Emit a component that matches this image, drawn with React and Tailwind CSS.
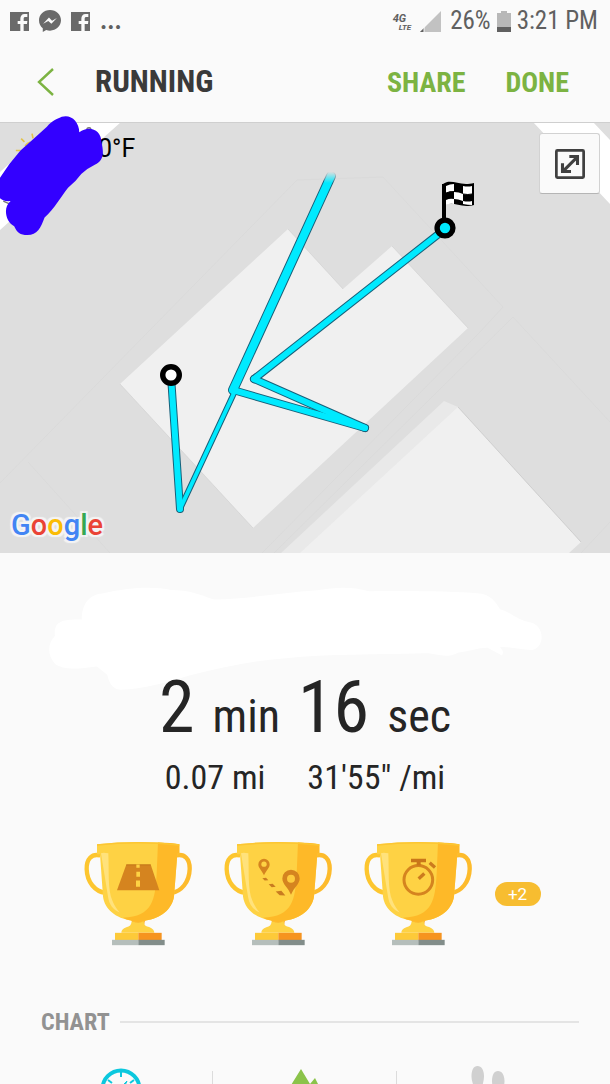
import React from "react";

function FacebookIcon() {
  return (
    <svg viewBox="0 0 57 57" className="size-[19px]" aria-hidden="true">
      <rect width="57" height="57" fill="#6a6a6a" />
      <path d="M31 57V36h-8v-9h8v-6c0-9 4-15 13-15h8v9h-5c-5 0-6 2-6 6v6h11l-1 9H41v21z" fill="#fafafa" />
    </svg>
  );
}

function MessengerIcon() {
  return (
    <svg viewBox="0 0 64 64" className="size-[22px]" aria-hidden="true">
      <path d="M32 0C14 0 0 13 0 30c0 10 4 18 11 23v11l10-6c4 1 7 2 11 2 18 0 32-13 32-30S50 0 32 0z" fill="#6a6a6a" />
      <path d="M12 40l17-18 9 9 14-8-16 17-9-8z" fill="#fafafa" />
    </svg>
  );
}

function StatusBar() {
  return (
    <div className="flex h-[42px] items-center justify-between pl-[10px] pr-[12px] text-[25px] leading-[30px] text-[#606060]">
      <div className="flex items-center gap-[10px]">
        <FacebookIcon />
        <MessengerIcon />
        <FacebookIcon />
        <span className="font-bold">...</span>
      </div>
      <div className="flex items-center gap-[6px]">
        <div className="flex flex-col pr-[3px] pt-[3px] font-[Roboto] font-bold italic">
          <span className="text-[11px] leading-[9px]">4G</span>
          <span className="pl-[6px] text-[8px] leading-[9px]">LTE</span>
        </div>
        <svg viewBox="0 0 21 21" className="mr-[3px] size-[21px]" aria-hidden="true">
          <path d="M21 0v21H0z" fill="#c2c2c2" />
          <path d="M4 17v4H0z" fill="#606060" />
          <path d="M4 16v5" stroke="#fafafa" />
        </svg>
        <span>26%</span>
        <svg viewBox="0 0 14 21" className="h-[21px] w-[14px]" aria-hidden="true">
          <path d="M4 0h6v2h4v14H0V2h4z" fill="#b8b8b8" />
          <path d="M0 16h14v5H0z" fill="#606060" />
        </svg>
        <span>3:21 PM</span>
      </div>
    </div>
  );
}

function TitleBar() {
  return (
    <header className="flex h-[80px] items-center pl-[36px] pr-[41px] font-bold">
      <button type="button" aria-label="Back" className="mr-[40px]">
        <svg viewBox="0 0 19 28" className="h-[28px] w-[19px]" fill="none" stroke="#7cb342" strokeWidth="2.4" aria-hidden="true">
          <path d="M17 1L3 14l14 13" />
        </svg>
      </button>
      <h1 className="flex-1 text-[31px] leading-[40px] text-[#3a3a3a]">RUNNING</h1>
      <div className="flex gap-[40px] pt-[2px] text-[28px] leading-[40px] text-[#7cb342]">
        <button type="button">SHARE</button>
        <button type="button">DONE</button>
      </div>
    </header>
  );
}

const ROUTE = [
  { d: "M171 254L180 387", w: 7 },
  { d: "M180 387L235 269", w: 5 },
  { d: "M254 257L445 107", w: 7 },
  { d: "M233 268L365 306", w: 7 },
  { d: "M365 306L254 257", w: 7 },
  { d: "M233 268L331 54", w: 9 },
];

function FinishFlag() {
  return (
    <g>
      <path d="M444 62v38" stroke="#000" strokeWidth="4" />
      <path d="M443 62c9-6 16 3 31-1v22c-14 4-21-5-31 1z" fill="#000" />
      <path d="M446 64q4-2 8-2v7q-4 0-8 2zM463 64q5 1 9 0v8q-4 1-9 0zM454 70q5 0 9 2v7q-5-2-9-2zM446 78q4-2 8-1v5q-4-1-8 1zM463 79q5 1 9 0v4q-4 0-9-1z" fill="#fff" />
      <path d="M446 71q4-2 8-1M463 72q5 1 9 0" stroke="#000" fill="none" />
    </g>
  );
}

function RouteMap() {
  return (
    <section aria-label="Route" className="relative">
      <svg viewBox="0 0 610 431" className="block w-full" aria-hidden="true">
        <defs>
          <linearGradient id="tip" x1="0" y1="0" x2="0" y2="1">
            <stop offset="0.2" stopColor="#dedede" />
            <stop offset="1" stopColor="#dedede" stopOpacity="0" />
          </linearGradient>
        </defs>
        <rect width="610" height="431" fill="#dedede" />
        <path d="M56 0h65L0 108V50zM533 0h60l17 18v64z" fill="#fff" />
        <g fill="none" stroke="#dadada" strokeWidth="1">
          <path d="M0 361L297 58l86-3 120 130-23 25-218 221" />
          <path d="M610 300L513 195 274 431M28 340l82 91M610 400l-29 31" />
        </g>
        <path d="M288 107l55 60 49-43 76 82-215 200-133-144z" fill="#f0f0f0" />
        <path d="M288 107l55 60M392 124l76 82M120 262l133 144" stroke="#cfcfcf" strokeWidth=".6" />
        <path d="M281 431l163-152 14 6 20 30-120 116z" fill="#e9e9e9" />
        <path d="M300 431l158-146 123 135-12 11z" fill="#f0f0f0" />
        <path d="M458 285l123 135" stroke="#c8c8c8" strokeWidth=".8" />
        <g fill="none" strokeLinecap="round" stroke="#17607a">
          {ROUTE.map((s) => <path key={s.d} d={s.d} strokeWidth={s.w + 1} />)}
        </g>
        <g fill="none" strokeLinecap="round" stroke="#00eaff">
          {ROUTE.map((s) => <path key={s.d} d={s.d} strokeWidth={s.w - 1} />)}
        </g>
        <rect x="324" y="47" width="14" height="14" fill="url(#tip)" />
        <circle cx="171" cy="253" r="8.3" fill="#fff" stroke="#000" strokeWidth="5.4" />
        <FinishFlag />
        <circle cx="445" cy="106" r="7.9" fill="#00eaff" stroke="#000" strokeWidth="5.4" />
        <path d="M0 .5h610" stroke="#cfcfcf" />
      </svg>

      <div className="absolute left-[98px] top-[12px] font-[Roboto] text-[25px] leading-[30px] text-black">0°F</div>
      <svg viewBox="0 0 330 380" className="absolute -top-[12px] left-0 h-[126px] w-[109px]" aria-hidden="true">
        <path d="M48 122h14M64 86l10 10M97 71l3 14M76 108q6-10 16-12" stroke="#e3c34b" strokeWidth="5" fill="none" />
        <path d="M10 275l22 10M262 56q8-6 14 0" stroke="#777" strokeWidth="4" fill="none" />
        <path d="M142 50C158 32 175 25 187 20c26-9 53 13 53 47 30-24 68-7 67 30 9 35 5 56-20 68q-25 12-41 28-16 22-40 42c-22 27-40 63-71 90-12 32-22 53-52 53-22 0-32-9-40-27-26-12-35-57-11-76-20 2-29-7-34-10l-3-52q27-46 67-91 45-40 80-72z" fill="#3300ff" />
      </svg>

      <button
        type="button"
        aria-label="Expand map"
        className="absolute right-[10px] top-[11px] flex size-[61px] items-center justify-center rounded-[3px] border border-[#d2d2d2] border-b-[#b5b5b5] bg-[#fafafa]"
      >
        <svg viewBox="0 0 88 88" className="size-[30px]" fill="none" stroke="#404040" aria-hidden="true">
          <rect x="4" y="4" width="80" height="80" rx="3" strokeWidth="8" />
          <path d="M24 65l41-41M42 22h24v25M22 42v24h25" strokeWidth="9" />
        </svg>
      </button>

      <div className="absolute bottom-[10px] left-[11px] flex font-[Roboto] text-[29px] font-medium leading-[36px] [text-shadow:0_0_3px_#f4f4f4,2px_2px_1px_#f4f4f4,-2px_2px_1px_#f4f4f4,2px_-2px_1px_#f4f4f4,-2px_-2px_1px_#f4f4f4]">
        <span className="text-[#4285f4]">G</span>
        <span className="text-[#ea4335]">o</span>
        <span className="text-[#fbbc05]">o</span>
        <span className="text-[#4285f4]">g</span>
        <span className="text-[#34a853]">l</span>
        <span className="text-[#ea4335]">e</span>
      </div>
    </section>
  );
}

function Summary() {
  return (
    <section className="flex flex-col items-center text-[#252525]">
      <svg viewBox="50 50 1434 307" className="ml-[48px] mt-[32px] h-[106px] w-[494px] self-start" aria-hidden="true">
        <path d="M148 150c0-44 20-73 60-76 90-20 150-20 200-10 50 0 80 12 124 28 110-3 200-20 300-27 60-10 100-10 150 3 120-2 240 0 320 6 30 2 50 26 60 46 30 8 50 30 80 36 56 6 50 82 10 82-32 0-60-10-90-8 10 10 10 16 6 24l-42-22c-30 0-50 10-86 14-40 20-60 0-100 2-130 4-280 2-400 14-90 6-180 26-280 50-70 22-130 38-200 42-24-3-32-20-38-44l-30-24c-60 8-98 10-122-8-24-26-20-60 0-80-4-40 16-50 78-48z" fill="#fff" />
      </svg>
      <div className="-mt-[23px] flex items-baseline text-[46px] leading-[80px]">
        <span className="text-[72px]">2</span>
        <span className="ml-[18px]">min</span>
        <span className="ml-[18px] text-[72px]">16</span>
        <span className="ml-[18px]">sec</span>
      </div>
      <div className="mt-[1px] flex gap-[42px] text-[34px] leading-[40px]">
        <span>0.07 mi</span>
        <span>31'55" /mi</span>
      </div>
    </section>
  );
}

function Trophy({ label, children }) {
  return (
    <svg viewBox="27 34 324 314" className="h-[105px] w-[108px]" role="img" aria-label={label}>
      <path d="M76 77C50 70 34 88 35 118c1 40 26 67 56 71" fill="none" stroke="#fdc62f" strokeWidth="13" />
      <path d="M303 77c26-7 42 11 41 41-1 40-26 67-54 71" fill="none" stroke="#fdbb2c" strokeWidth="13" />
      <path d="M160 255h61c-8 12-13 19-13 29h-36c0-10-4-18-12-29z" fill="#f9a825" />
      <path d="M66 43Q190 30 313 43v29h-6L297 200c-6 40-42 66-85 72-14 6-30 6-44 0-44-7-79-32-84-72L75 73h-9z" fill="#fed244" />
      <path d="M249 38q40 1 64 5v29h-6l-10 128c-6 40-42 66-85 72-14 6-30 6-44 0q-14-2-24-8c90-4 96-54 101-132z" fill="#feb928" />
      <path d="M78 70q6-3 22 0c2 50-2 110 12 142 6 16 14 26 22 36-20-8-32-24-35-48z" fill="#ffe27c" />
      <path d="M66 43Q190 30 313 43v5Q190 34 66 48z" fill="#fcc632" />
      <path d="M170 274c14 5 26 5 36 0 1 12 6 15 18 18 10 5 14 9 14 17H139c0-8 5-13 15-17 10-2 15-7 16-18z" fill="#fed244" />
      <path d="M120 309h70v22h-70z" fill="#fdca39" />
      <path d="M190 309h70v22h-70z" fill="#f6941f" />
      <path d="M111 330h79v16h-79z" fill="#b5bebb" />
      <path d="M190 330h79v16h-79z" fill="#828d8a" />
      {children}
    </svg>
  );
}

function Awards() {
  return (
    <section className="flex items-center justify-center gap-[32px] pl-[14px] pt-[44px]">
      <Trophy label="Distance">
        <path d="M154 104h73l26 77H126z" fill="#d5841f" />
        <path d="M154 105h73" stroke="#b76d14" strokeWidth="2" />
        <path d="M184 104h10v10h-10zM184 126h11v15h-11zM183 152h12v19h-12z" fill="#fed244" />
      </Trophy>
      <Trophy label="Route">
        <path d="M147 136c-7-14-17-22-17-32a17 17 0 0134 0c0 10-10 18-17 32z" fill="#d5841f" />
        <circle cx="147" cy="103" r="8" fill="#fed244" />
        <path d="M228 195c-9-23-26-32-26-49a26 26 0 0152 0c0 17-17 26-26 49z" fill="#d5841f" />
        <circle cx="228" cy="147" r="12" fill="#fecb3e" />
        <path d="M142 145l11-1 7 7-11 1zM161 163l12-1 9 9-12 1zM182 185l17-2 12 14-17-1z" fill="#c97c21" />
      </Trophy>
      <Trophy label="Duration">
        <circle cx="190" cy="150" r="43" fill="none" stroke="#d5841f" strokeWidth="9" />
        <path d="M168 87h45v10h-16v10h-12V97h-17z" fill="#c97619" />
        <path d="M191 147l17-16M224 99l16 14" stroke="#cc7b1e" strokeWidth="10" />
      </Trophy>
      <button type="button" className="-ml-[9px] h-[24px] w-[46px] rounded-full bg-[#f7bd30] font-[Roboto] text-[17px] leading-[24px] text-white">+2</button>
    </section>
  );
}

function ChartTabs() {
  return (
    <section className="mt-[61px] pl-[30px] pr-[31px]">
      <div className="flex items-center gap-[10px] pl-[11px]">
        <h2 className="text-[24px] font-bold leading-[30px] text-[#929292]">CHART</h2>
        <div className="h-[2px] flex-1 bg-[#e4e4e4]" />
      </div>
      <div className="mt-[28px] flex items-start">
        <button type="button" aria-label="Speed" className="flex flex-1 justify-center pt-[3px]">
          <svg viewBox="0 0 42 42" className="size-[42px]" fill="none" stroke="#0bc8de" aria-hidden="true">
            <circle cx="21" cy="21" r="18.5" strokeWidth="4" />
            <path d="M21 3v6M8 12l4 3M34 12l-4 3M3 21h6M33 21h6" strokeWidth="2" />
            <path d="M27 13l-8 8 3 3z" fill="#0bc8de" />
          </svg>
        </button>
        <div className="mt-[6px] h-[40px] w-px bg-[#dcdcdc]" />
        <button type="button" aria-label="Elevation" className="flex flex-1 justify-center pt-[4px]">
          <svg viewBox="0 0 42 42" className="size-[42px]" aria-hidden="true">
            <path d="M18 0l9 15 5-6 10 20v8H0v-8z" fill="#8bc34a" />
          </svg>
        </button>
        <div className="mt-[6px] h-[40px] w-px bg-[#dcdcdc]" />
        <button type="button" aria-label="Cadence" className="flex flex-1 justify-center pt-[1px]">
          <svg viewBox="0 0 34 46" className="h-[46px] w-[34px]" fill="#d0d0d0" aria-hidden="true">
            <path d="M6.500 0c4 0 6.500 4 6.500 10s-2 8-1.500 14h-9C3 18 .5 16 .5 10S2.500 0 6.500 0zM2.500 26h9v6a4.500 4.500 0 01-9 0z" />
            <path d="M27 5c4 0 6.500 4 6.500 10s-2 8-1.500 14h-9c.5-6-2-8-2-14s2-10 6-10zM23 31h9v6a4.500 4.500 0 01-9 0z" />
          </svg>
        </button>
      </div>
    </section>
  );
}

export default function App() {
  return (
    <div className="h-screen overflow-y-auto bg-[#fafafa] font-['Roboto_Condensed','Liberation_Sans_Narrow',Roboto,sans-serif] [scrollbar-width:none]">
      <StatusBar />
      <TitleBar />
      <main>
        <RouteMap />
        <Summary />
        <Awards />
        <ChartTabs />
      </main>
    </div>
  );
}
